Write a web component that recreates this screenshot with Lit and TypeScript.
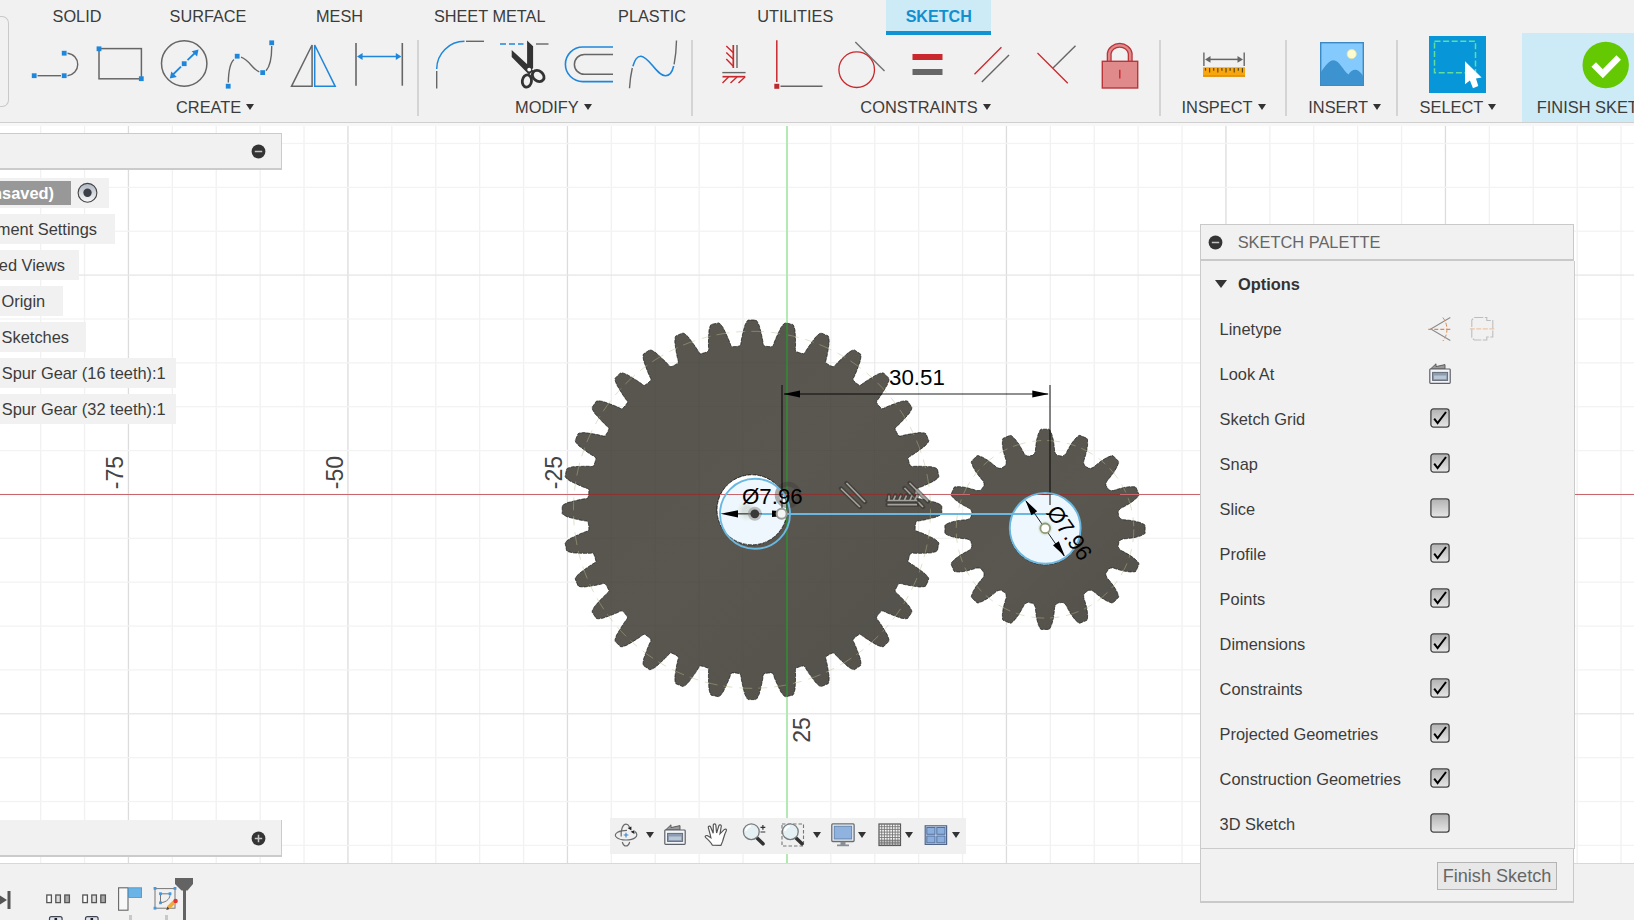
import { LitElement, html, svg, css } from "lit";
import { customElement } from "lit/decorators.js";

const BLUE = "#1f87db";
const GREY = "#666";
const RED = "#c9282d";

const range = (n: number, from = 0) => Array.from({ length: n }, (_, i) => i + from);

/** An icon whose drawing is given in window coordinates. */
const ico = (x: number, y: number, w: number, h: number, body: unknown) =>
  html`<svg class="ico" width=${w} height=${h} viewBox="${x} ${y} ${w} ${h}">${body}</svg>`;

const handle = (x: number, y: number) =>
  svg`<rect x=${x - 2.4} y=${y - 2.4} width="4.8" height="4.8" fill=${BLUE} />`;
const line = (x1: number, y1: number, x2: number, y2: number, c = GREY, w = 1.4) =>
  svg`<line x1=${x1} y1=${y1} x2=${x2} y2=${y2} stroke=${c} stroke-width=${w} />`;
const path = (d: string, c = GREY, w = 1.4) => svg`<path d=${d} fill="none" stroke=${c} stroke-width=${w} />`;
const solid = (d: string, c: string) => svg`<path d=${d} fill=${c} />`;

const createIcons = [
  svg`${line(38, 75.7, 61.5, 75.7)}${path("M68 53.2A11.3 11.3 0 0 1 68 75.7")}${handle(34.7, 75.7)}${handle(64.7, 53.2)}${handle(64.7, 75.7)}`,
  svg`<rect x="99" y="48.6" width="42.4" height="30.2" fill="none" stroke=${GREY} stroke-width="1.5" />
    ${handle(99, 48.8)}${handle(141.3, 78.7)}`,
  svg`<circle cx="184.7" cy="63.5" r="22.7" fill="none" stroke=${GREY} stroke-width="1.5" />
    ${line(173, 75, 181.5, 66.7, BLUE, 1.8)}${line(188, 60.2, 196, 52.5, BLUE, 1.8)}${handle(184.7, 63.7)}
    ${solid("M170.3 78.4L171.8 71.4L177.3 77ZM199 49.6L192.2 51.2L197.6 56.6Z", BLUE)}`,
  svg`${path("M228.3 82.5C228.5 72 230 63 234 59.5M241 57.2C250 60.5 252 69 259.3 71.8M266 70.8C270.3 66 271.8 57 271.7 46")}
    ${handle(228.2, 86.2)}${handle(237.2, 56.2)}${handle(262.7, 72.6)}${handle(271.7, 42.8)}`,
  svg`${path("M312.6 45V86.3H292Z", GREY, 1.5)}${path("M315.2 45V86.3H335.7Z", BLUE, 1.5)}`,
  svg`${line(356, 43, 356, 85.7, GREY, 1.6)}${line(402.3, 43, 402.3, 85.7, GREY, 1.6)}${line(360, 56.5, 398, 56.5, BLUE, 1.6)}
    ${solid("M357 56.5L362.6 53V60ZM401.4 56.5L395.8 53V60Z", BLUE)}`,
];

const modifyIcons = [
  svg`${path("M436.7 69A27.8 27.8 0 0 1 464.5 41.3", BLUE, 1.5)}${line(466, 41.3, 484, 41.3)}${line(436.7, 71, 436.7, 88.5)}`,
  svg`<line x1="500.5" y1="44" x2="524" y2="44" stroke=${BLUE} stroke-width="1.5" stroke-dasharray="6 3" />
    ${line(536.5, 44, 549, 44)}
    ${solid("M527.6 40.5L533.6 46.2V68L531 71L527.6 67ZM512.2 50L528.5 65L534 71L529.5 74.5L524 69L512.2 57Z", "#333")}
    <ellipse cx="527.4" cy="81" rx="4.6" ry="6.2" fill="none" stroke="#333" stroke-width="2.8" transform="rotate(8 527.4 81)" />
    <ellipse cx="538.7" cy="76" rx="6.3" ry="5" fill="none" stroke="#333" stroke-width="2.8" transform="rotate(38 538.7 76)" />
    <circle cx="529.7" cy="69.6" r="1.9" fill="#fff" />`,
  svg`${path("M613 47H582.7A17.3 17.3 0 0 0 582.7 81.6H613", BLUE, 1.6)}${path("M613 54.5H584.3A9.9 9.9 0 0 0 584.3 74.3H613", GREY, 1.5)}`,
  svg`${path("M630 88.3C630.5 80 631.5 73.5 632.8 68")}
    ${path("M633.4 66.2C635.5 58.5 638 56 641.5 56.2C650 56.8 657 75.8 666 75.8C671 75.8 673 71 674.2 66", BLUE, 1.6)}
    ${path("M674.6 64.3C676 57 676.8 50 677 40.5")}`,
];

const constraintIcons = [
  svg`${line(734.3, 45, 734.3, 68, RED, 1.7)}${line(738, 45, 738, 68)}
    ${path("M727.3 46L734 52.5M727.3 52.5L734 59M727.3 59L734 66M729.5 77L723.5 83M738 77L731.5 83M746 77L739.5 83", RED, 1.4)}
    ${line(723.3, 72.6, 746.6, 72.6)}${line(723.5, 76.7, 746.3, 76.7, RED, 1.7)}`,
  svg`${line(777.3, 40.3, 777.3, 82, RED, 1.5)}<rect x="774.8" y="83.8" width="5" height="5" fill="#b92b30" />${line(781, 86.3, 823, 86.3)}`,
  svg`<circle cx="857.7" cy="69.7" r="17.8" fill="none" stroke=${RED} stroke-width="1.3" />${line(856.3, 42, 885.5, 71, "#707070")}`,
  svg`<rect x="913" y="54" width="30" height="6" fill=${RED} /><rect x="913" y="69" width="30" height="6" fill=${GREY} />`,
  svg`${line(975.5, 74.2, 1002.4, 47.2, RED, 1.3)}${line(982.8, 82, 1010, 55)}`,
  svg`${line(1038, 53, 1068.3, 83.2, RED, 1.3)}${line(1053.5, 68, 1076, 45.7)}`,
  svg`<path d="M1110.2 61V53.5A10.6 9.5 0 0 1 1131.2 53.5V61" fill="none" stroke="#b8353a" stroke-width="5" />
    <path d="M1110.2 61V53.5A10.6 9.5 0 0 1 1131.2 53.5V61" fill="none" stroke="#e08a8c" stroke-width="2.4" />
    <rect x="1103.3" y="61.3" width="35.4" height="26.7" fill="#e08a8c" stroke="#b8353a" stroke-width="1.4" />
    ${line(1120.8, 69.7, 1120.8, 78.5, RED, 1.4)}`,
];

const inspectIcon = svg`
  ${line(1204.9, 52.5, 1204.9, 66)}${line(1245.2, 52.5, 1245.2, 66)}${line(1210, 59.4, 1241, 59.4, GREY, 1.5)}
  ${solid("M1206 59.4L1211.5 56V62.8ZM1244 59.4L1238.5 56V62.8Z", GREY)}
  <rect x="1204" y="67.3" width="42" height="9.4" fill="#f9a60c" />${line(1204, 76, 1246, 76, "#dd8f07", 1.3)}
  ${range(10).map((i) => line(1206.5 + i * 4.1, 68, 1206.5 + i * 4.1, i % 2 ? 72.5 : 70.7, "#5c4a20", 1.2))}`;

const insertIcon = svg`
  <rect x="1321.7" y="42.7" width="42.6" height="42.6" fill="#84cafc" stroke="#3c8ac4" stroke-width="1.4" />
  ${solid("M1322 72C1326 66 1330 60.2 1334.5 60.2C1340 60.2 1344 70 1349.5 74.5C1351.5 71 1354 69.5 1357 69.8C1360 70.2 1362 73 1364 76V85H1322Z", "#3d93cf")}
  <circle cx="1352.7" cy="54" r="4.6" fill="#fffbd0" stroke="#e9e7a0" stroke-width="0.8" />`;

const selectIcon = svg`
  <rect x="1429" y="36" width="57" height="57" fill="#0796d8" />
  <rect x="1434.5" y="41.3" width="41" height="31.4" fill="none" stroke="#62dd9c" stroke-width="1.5" stroke-dasharray="6 2.6" />
  ${solid("M1465 61.3L1481.6 77.6L1476 78.4L1478.3 86L1473 88.3L1469.9 80.6L1465 84.3Z", "#fff")}`;

const finishIcon = svg`
  <circle cx="1605.7" cy="65" r="23.2" fill="#64c803" />
  <path d="M1593.7 64.6L1602.8 73.8L1618.7 57.6" fill="none" stroke="#fff" stroke-width="6.4" />`;

const cells = (x: number, y: number, icons: unknown[]) => icons.map((b, i) => ico(x + i * 64.5, y, 64.5, 60, b));

interface Group {
  label: string;
  width: number;
  iconPad: number;
  textPad: number;
  icons: unknown;
}

const groups: Group[] = [
  { label: "CREATE", width: 408, iconPad: 15.2, textPad: 167, icons: cells(24.5, 35, createIcons) },
  { label: "MODIFY", width: 272.3, iconPad: 8.7, textPad: 96, icons: cells(428, 35, modifyIcons) },
  { label: "CONSTRAINTS", width: 466, iconPad: 8.2, textPad: 167, icons: cells(702, 35, constraintIcons) },
  { label: "INSPECT", width: 124, iconPad: 34.2, textPad: 20.2, icons: ico(1196, 35, 60, 60, inspectIcon) },
  { label: "INSERT", width: 109, iconPad: 25.2, textPad: 21, icons: ico(1313, 35, 60, 60, insertIcon) },
  { label: "SELECT", width: 121.5, iconPad: 28.4, textPad: 21.3, icons: ico(1427, 35, 60, 60, selectIcon) },
];

/** Closed outline of a spur gear; profile is [half width, radius] from tip to root. */
function gearPath(cx: number, cy: number, teeth: number, profile: number[][], root: number, hole: number) {
  const pts: string[] = [];
  for (let i = 0; i < teeth; i++) {
    const a = (i * 2 * Math.PI) / teeth;
    const put = (t: number, r: number) => {
      const x = cx + r * Math.sin(a) + t * Math.cos(a);
      const y = cy - r * Math.cos(a) + t * Math.sin(a);
      pts.push(`${x.toFixed(2)} ${y.toFixed(2)}`);
    };
    [...profile].reverse().forEach(([t, r]) => put(-t, r));
    profile.forEach(([t, r]) => put(t, r));
    const h = Math.PI / teeth;
    put(root * Math.sin(h), root * Math.cos(h));
  }
  return `M${pts.join("L")}Z M${cx - hole} ${cy}a${hole} ${hole} 0 1 0 ${2 * hole} 0a${hole} ${hole} 0 1 0 ${-2 * hole} 0Z`;
}

const bigGear = gearPath(752, 509.8, 32, [[3.8, 189.8], [5.2, 188.4], [7.2, 184.3], [8.8, 178], [10.2, 172], [11, 167.5], [11.2, 165.5], [12, 163.9]], 164, 35);
const smallGear = gearPath(1045, 529.3, 16, [[3.8, 100.1], [4.8, 99.4], [6.8, 95], [8.4, 89], [9.3, 82], [9.6, 78], [10.6, 75.6], [12.2, 74]], 75, 35.5);

const glyphLine = (d: string) => svg`
  <path d=${d} stroke="#35332f" stroke-opacity="0.6" stroke-width="4.4" stroke-linecap="round" fill="none" />
  <path d=${d} stroke="#a3a29c" stroke-width="1.7" fill="none" />`;

const scene = svg`
  <defs>
    <linearGradient id="steel" x1="0" y1="0" x2="1" y2="1">
      <stop offset="0" stop-color="#57564f" /><stop offset="0.5" stop-color="#5a5650" /><stop offset="1" stop-color="#53514b" />
    </linearGradient>
    <radialGradient id="halo"><stop offset="0.4" stop-color="#8f9a78" stop-opacity="0.75" /><stop offset="1" stop-color="#c8dba8" stop-opacity="0" /></radialGradient>
  </defs>
  ${range(38, -17).map((i) => svg`<rect x=${786.3 + i * 43.9} y="126" width="1.3" height="740" fill=${i % 5 === 0 ? "#dcdcdc" : "#f1f1f1"} />`)}
  ${range(18, -8).map((i) => svg`<rect x="0" y=${493.8 + i * 43.87} width="1634" height="1.3" fill=${i % 5 === 0 ? "#e6e6e6" : "#f3f3f3"} />`)}
  <g class="axis">
    ${[["-75", 114.8], ["-50", 334.6], ["-25", 554.2]].map(([t, x]) => svg`<text transform="translate(${Number(x) + 8} 472.5) rotate(-90)" text-anchor="middle">${t}</text>`)}
    <text transform="translate(810 730) rotate(-90)" text-anchor="middle">25</text>
  </g>
  <rect x="786" y="126" width="2" height="740" fill="#b3e9b3" />
  <path d=${bigGear} fill="url(#steel)" fill-rule="evenodd" />
  <path d=${bigGear} fill="none" stroke="#1c1c19" stroke-width="0.7" stroke-dasharray="4 1" />
  <path d=${smallGear} fill="url(#steel)" fill-rule="evenodd" />
  <path d=${smallGear} fill="none" stroke="#1c1c19" stroke-width="0.7" stroke-dasharray="4 1" />
  <circle cx="752" cy="509.8" r="178.5" fill="none" stroke="#b9bd8a" stroke-opacity="0.5" stroke-width="0.9" stroke-dasharray="13 7 9 6" />
  <circle cx="1045" cy="529.3" r="88.8" fill="none" stroke="#b9bd8a" stroke-opacity="0.5" stroke-width="0.9" stroke-dasharray="13 7 9 6" />
  ${range(8, -4).map((i) => svg`<rect x=${786.3 + i * 43.9} y="350" width="1" height="320" fill="#000" fill-opacity="0.025" />`)}
  ${range(7, -3).map((i) => svg`<rect x="590" y=${493.8 + i * 43.87} width="324" height="1" fill="#000" fill-opacity="0.025" />`)}
  <circle cx="752" cy="509.8" r="35" fill="#fff" />
  <clipPath id="bore"><circle cx="752" cy="509.8" r="35" /></clipPath>
  <circle cx="755" cy="513.8" r="35" fill="#eef7fe" clip-path="url(#bore)" />
  <circle cx="752" cy="509.8" r="35" fill="none" stroke="#222" stroke-width="0.8" stroke-dasharray="4 1" />
  <circle cx="1045.2" cy="528.3" r="35.3" fill="#eef7fe" />
  <rect x="786" y="323" width="2" height="373" fill="#38803a" />
  <rect x="0" y="494" width="1634" height="1" fill="#c9666b" />
  <rect x="588" y="494" width="132" height="1" fill="#8a3432" />
  <rect x="790" y="494" width="126" height="1" fill="#8a3432" />
  <rect x="970" y="494" width="150" height="1" fill="#8a3432" />
  <circle cx="788" cy="495" r="11" fill="none" stroke="#3c3a36" stroke-opacity="0.4" stroke-width="4.5" />
  <g stroke="#000" stroke-opacity="0.58" stroke-width="1.6">
    <path d="M782 385V508M1050 385V505" />
    <path d="M784 394H1048" />
  </g>
  <path d="M783.5 394L800 390.6V397.4ZM1049 394L1032.3 390.6V397.4Z" />
  <g fill="none" stroke="#6ab8e0">
    <circle cx="755" cy="513.8" r="35" stroke-width="1.9" />
    <circle cx="1045.2" cy="528.3" r="35.4" stroke-width="1.9" />
    <path d="M762 514H776M787 514H1050" stroke-width="2.2" />
  </g>
  ${glyphLine("M841 488.5L860 507M846.5 483L865 502")}
  ${glyphLine("M904.5 488L923 507M909.5 483L928 501.5")}
  ${glyphLine("M887.5 500.5H917M887.5 504.7H917M889 500V495.5M893.5 500L895.5 495.5M899 500L901 495.5M904.5 500L906.5 495.5M910 500L912 495.5M915 500L917 495.5")}
  <circle cx="747" cy="511" r="11" fill="url(#halo)" opacity="0.35" />
  <path d="M736 513.8H762" stroke="#555" stroke-width="1.5" />
  <path d="M720.5 513.8L738 510.2V517.4ZM779 511L772 510.5V517L779 516.5Z" />
  <circle cx="754.8" cy="513.8" r="7" fill="#888" fill-opacity="0.5" /><circle cx="754.8" cy="513.8" r="4.4" fill="#3a3838" />
  <circle cx="781.6" cy="513.8" r="5" fill="#f4f6f4" stroke="#9a9a98" stroke-width="2" />
  <text class="dim" x="889" y="385">30.51</text>
  <text class="dim" x="742" y="503.7">Ø7.96</text>
  <path d="M1026 501L1064 556" stroke="#222" stroke-width="1" />
  <path d="M1025.3 500L1037.2 511.2L1031.4 515.2ZM1065 556.6L1053 545.2L1058.8 541.2Z" />
  <circle cx="1045.2" cy="528.3" r="8" fill="url(#halo)" />
  <circle cx="1045.2" cy="528.3" r="4.8" fill="#fff" stroke="#8f9a78" stroke-width="1.8" />
  <text class="dim" transform="translate(1069.8 532.6) rotate(55)" text-anchor="middle" y="8">Ø7.96</text>`;

const tri = (cls = "") => html`<span class="tri ${cls}"></span>`;

const badge = (plus: boolean) => html`<svg class="ico" width="15" height="15" viewBox="0 0 15 15">
  <circle cx="7.5" cy="7.5" r="6.9" fill="#343434" />
  <path d=${plus ? "M3.8 7.5H11.2M7.5 3.8V11.2" : "M3.8 7.5H11.2"} stroke="#c4c4c4" stroke-width="1.5" /></svg>`;

const lookAt = html`<svg class="ico look" width="22" height="22" viewBox="0 0 22 22">
  <path d="M1.5 6L7 .8V3.6L16 1.6V6Z" fill="#999" stroke="#555" stroke-width="0.9" />
  <rect x="0.8" y="6" width="20.4" height="14.3" rx="0.8" fill="#f3f5f8" stroke="#5c6068" stroke-width="1.2" />
  <rect x="3.6" y="9.4" width="15" height="8" fill="#8c9db3" stroke="#646b75" stroke-width="1" />
  <rect x="5" y="12.5" width="12.2" height="3.6" fill="#b9c6d5" /></svg>`;

const lens = svg`<path d="M14.5 14.5L21 20.8" stroke="#333" stroke-width="3.6" stroke-linecap="round" />
  <circle cx="9.3" cy="8.7" r="7.9" fill="#e4f0f4" stroke="#777c80" stroke-width="1.3" />
  <path d="M4 8A5.5 5.5 0 0 1 9 3.2" stroke="#fff" stroke-width="2" fill="none" />`;

const nav = (body: unknown) => html`<svg class="ico" width="24" height="24" viewBox="0 0 24 24">${body}</svg>`;

const orbit = nav(svg`
  <path d="M8.3 19C9 21.5 10.3 23 12 23C13.7 23 15 21.5 15.7 19M7.2 13.5C6.6 6.5 8.8 1.2 12 1.2C13.4 1.2 14.6 2.2 15.5 4" fill="none" stroke="#6a6a6a" stroke-width="1.2" />
  <path d="M21 8.5C26 13 20 17 12 17C3.5 17 -2 12.5 3.6 9.2C5.8 8 9 7.4 13 7.4" fill="none" stroke="#6a6a6a" stroke-width="1.2" />
  <path d="M12 9.8V14.4M9.7 12H14.3" stroke="#3b83cf" stroke-width="1.1" />
  <path d="M13.6 5L17.4 3.4V7.4ZM16.6 8.8L20.4 7.2V11Z" fill="#222" />`);
const hand = nav(svg`<path d="M8.4 22.2C7 19.4 4.5 17 1.5 14.4C.6 13.4 1.8 12.2 3.2 12.6L6.9 14.8C6.3 11.4 5 7.2 4.3 4.6C4.1 3 6 2.6 6.6 4L9.2 10.2L9.3 1.9C9.4 .4 11.7 .4 11.8 1.9L12.6 10L14.9 2.6C15.5 1.2 17.5 1.8 17.3 3.2L16 10.8L20.4 6.4C21.6 5.5 23.1 6.6 22.2 8C20.3 11.3 19.6 15.2 18.6 18.4L16.9 22.4Z" fill="#fff" stroke="#555" stroke-width="1.2" />`);
const zoomer = nav(svg`${lens}<path d="M18.5 4.3H23.3M20.9 1.9V6.7M18.5 9H23.3" stroke="#333" stroke-width="1.2" />`);
const zoomWindow = nav(svg`<rect x="1" y="1" width="21.5" height="22" fill="none" stroke="#777" stroke-width="1.1" stroke-dasharray="3.5 2" />${lens}`);
const monitor = nav(svg`<rect x="0.8" y="0.9" width="22.3" height="17.6" rx="1" fill="#f0f3f6" stroke="#666d76" stroke-width="1.3" />
  <rect x="3.2" y="3.2" width="17.5" height="12.8" fill="#8fb3de" stroke="#5d7fa8" stroke-width="0.9" />
  <path d="M9.5 18.8H14.5V21.5H18V23.3H6V21.5H9.5Z" fill="#888f96" />`);
const gridIcon = nav(svg`<rect x="1" y="1" width="21.5" height="21.5" fill="#f4f4f4" stroke="#555" stroke-width="1.2" />
  ${range(7, 1).map((i) => svg`${line(1 + i * 2.7, 1, 1 + i * 2.7, 22.5, "#777", 0.9)}${line(1, 1 + i * 2.7, 22.5, 1 + i * 2.7, "#777", 0.9)}`)}
  <rect x="1" y="17" width="21.5" height="5.5" fill="#666" fill-opacity="0.35" />`);
const viewports = nav(svg`<rect x="1.2" y="2.8" width="21.4" height="18.6" fill="#d4e1f2" stroke="#4f658a" stroke-width="1.2" />
  ${[[2.8, 4.5], [12.8, 4.5], [2.8, 13], [12.8, 13]].map(([x, y]) => svg`<rect x=${x} y=${y} width="8.2" height="6.8" fill="#8aaedd" stroke="#55709c" stroke-width="1" />`)}`);

const linetype = html`<svg class="ico" width="70" height="26" viewBox="1429.7 316 70 26">
  <path d="M1450 317.5L1430.5 329L1450 340.5" fill="none" stroke="#8c8c8c" stroke-width="1.1" />
  <path d="M1428 329.4H1452" stroke="#df8a54" stroke-width="1.1" stroke-dasharray="4 2" />
  <path d="M1442.5 317.5C1448 324 1448 335 1442.5 341" fill="none" stroke="#df8a54" stroke-width="1" stroke-dasharray="4 2" />
  <path d="M1474 317.5H1486.5V320.5H1492.5V337H1486.5V340H1474L1471.5 337.5V320Z" fill="none" stroke="#bdbdbd" stroke-width="1.1" stroke-dasharray="9 1.5" />
  <path d="M1469.5 328.8H1494" stroke="#ecc6a8" stroke-width="1.2" stroke-dasharray="5 1.5" /></svg>`;

const box = (on: boolean) => html`<svg class="ico check" width="20" height="20" viewBox="0 0 20 20">
  <defs><linearGradient id="g" x1="0" y1="0" x2="0" y2="1">
    <stop offset="0" stop-color=${on ? "#b2b2b2" : "#fbfbfb"} /><stop offset="1" stop-color=${on ? "#e6e6e6" : "#b6b6b6"} /></linearGradient></defs>
  <rect x="0.9" y="0.9" width="18.2" height="18.2" rx="2.6" fill="url(#g)" stroke="#444" stroke-width="1.3" />
  ${on ? svg`<path d="M4.2 10.6L7.6 15L16 4" fill="none" stroke="#000" stroke-width="2" />` : ""}</svg>`;

const options: [string, boolean][] = [
  ["Sketch Grid", true], ["Snap", true], ["Slice", false], ["Profile", true], ["Points", true], ["Dimensions", true],
  ["Constraints", true], ["Projected Geometries", true], ["Construction Geometries", true], ["3D Sketch", false],
];

/** Label, row width, space to the right of the label. */
const tree: [string, number, number][] = [
  ["Document Settings", 115, 18], ["Named Views", 79, 14], ["Origin", 62.5, 17.3], ["Sketches", 86, 17],
  ["Spur Gear (16 teeth):1", 176, 10.3], ["Spur Gear (32 teeth):1", 176, 10.3],
];

const timelineArt = svg`
  ${solid("M0 895.5L7 900L0 904.5Z", "#555")}${line(9, 891, 9, 909, "#555", 3)}
  ${[46, 82].map((x) => range(3).map((i) => svg`<rect x=${x + 0.8 + i * 9} y="895" width="4.6" height="7.6" fill=${["#fff", "#ddd", "#aaa"][i]} stroke="#555" stroke-width="1.3" />`))}
  ${[49.5, 85.5].map((x) => svg`<rect x=${x} y="916.7" width="12.6" height="8" rx="2" fill="#dfe3f2" stroke="#3f4352" stroke-width="1.2" /><rect x=${x + 5} y="918" width="2.6" height="3" fill="#222" />`)}
  <rect x="118.6" y="887.8" width="9.4" height="22.4" fill="#f8f8f8" stroke="#666" stroke-width="1.1" />
  <rect x="128.6" y="887.8" width="13" height="9.6" fill="#69b3e7" stroke="#4a90c4" stroke-width="0.8" />
  ${line(130.5, 915, 130.5, 920, "#c8c8c8", 3)}${line(166.5, 915, 166.5, 920, "#c8c8c8", 3)}
  <rect x="155" y="888.6" width="20" height="19.6" fill="none" stroke="#777" stroke-width="1" />
  <path d="M160.5 902.8V893.8H170C170.3 898 167.5 902 160.5 902.8Z" fill="none" stroke="#777" stroke-width="1" />
  ${[[155, 888.4], [175, 888.4], [155, 908.2], [160.5, 893.7], [170, 893.7], [160.5, 902.8]].map(([x, y]) => svg`<rect x=${x - 1.4} y=${y - 1.4} width="2.8" height="2.8" fill="#3d9be6" />`)}
  ${solid("M166.3 910L167.8 905.6L174 899.6L176.6 902.6L170.3 908.6Z", "#f0ab3a")}${solid("M166.3 910L167.4 906.6L169.5 909Z", "#444")}
  <circle cx="175.6" cy="901" r="2.2" fill="#e03535" />
  ${line(184.5, 888, 184.5, 920, "#636363", 3)}${solid("M175 878H193V884L187.5 890.5H181.5L175 884Z", "#636363")}`;

@customElement("app-root")
export class AppRoot extends LitElement {
  static styles = css`
    :host {
      display: flex;
      flex-direction: column;
      position: relative;
      width: 1634px;
      height: 920px;
      overflow: hidden;
      background: #fff;
      color: #3c3c3c;
      font: 16.4px/20px "Liberation Sans", Arial, sans-serif;
      white-space: nowrap;
    }
    .ico { display: block; flex: none; overflow: visible; }
    .toolbar { flex: none; height: 122px; background: #f1f1f1; border-bottom: 1px solid #cfcfcf; display: flex; flex-direction: column; }
    .tabs { height: 35px; display: grid; padding-left: 12px; grid-template-columns: 130px 132px 131px 169.4px 155.2px 131.4px 25.5px 104.5px; }
    .tab { text-align: center; line-height: 32px; height: 35px; font-size: 16.3px; }
    .tab.active { grid-column: 8; box-sizing: border-box; background: #cdeaf7; color: #118fcf; font-weight: bold; font-size: 16.1px; border-bottom: 4px solid #1192d3; }
    .groups { display: flex; height: 87px; }
    .edge { box-sizing: border-box; width: 9px; height: 91px; margin-top: -19px; border: 1.5px solid #c9c9c9; border-left: none; border-radius: 0 7px 7px 0; flex: none; }
    .group { box-sizing: border-box; height: 87px; flex: none; }
    .icons { display: flex; height: 60px; }
    .label { display: flex; align-items: center; gap: 5px; height: 24px; }
    .sep { width: 2px; height: 76px; margin-top: 5px; background: #d4d4d4; flex: none; }
    .finish { margin-left: 2px; margin-top: -2px; padding-top: 2px; width: 112px; height: 87px; background: #cdeaf7; overflow: hidden; flex: none; }
    .finish .icons { padding-left: 53px; }
    .finish .label { padding-left: 15px; }
    .tri { width: 0; height: 0; border: 4.7px solid transparent; border-top: 6px solid #333; border-bottom: none; flex: none; }
    .tri.big { border-width: 8px 6.3px 0; }
    .view { flex: 1; position: relative; overflow: hidden; border-top: 3px solid #f7f7f7; }
    .scene { display: block; }
    .axis { font-size: 23px; fill: #444; }
    .dim { font-size: 22.3px; fill: #000; }
    .timeline { flex: none; height: 56px; background: #f1f1f1; border-top: 1px solid #d8d8d8; }
    .timeline svg { display: block; }

    .bar { position: absolute; left: 0; box-sizing: border-box; width: 282px; height: 37px; background: #f1f1f1; border: 1px solid #cbcbcb; border-left: none; border-bottom-width: 2px; display: flex; align-items: center; justify-content: flex-end; padding-right: 15.3px; }
    .bar.top { top: 133px; }
    .bar.bottom { top: 820px; border-top: none; padding-top: 2px; }
    .tree { position: absolute; top: 178px; left: 0; display: flex; flex-direction: column; gap: 6px; align-items: flex-start; }
    .node { box-sizing: border-box; height: 30px; background: #f1f1f1; display: flex; align-items: center; justify-content: flex-end; overflow: hidden; }
    .node.root { width: 109px; padding-right: 11px; gap: 6px; }
    .doc { box-sizing: border-box; height: 24px; width: 71px; background: #989898; color: #fff; font-weight: bold; display: flex; align-items: center; justify-content: flex-end; padding-right: 17px; overflow: hidden; flex: none; }
    .navbar { position: absolute; left: 610px; top: 818px; width: 356px; height: 35.5px; background: #f0f0f0; display: grid; align-items: center; box-sizing: border-box; padding: 0 0 1px 4px;
      grid-template-columns: 32px 19px 38.5px 38.5px 39px 32px 17.5px 27.5px 19.5px 27px 19px 28px 10px; }

    .palette { position: absolute; left: 1200px; top: 224px; width: 375px; display: flex; flex-direction: column; }
    .head { box-sizing: border-box; width: 374px; height: 37px; border: 1px solid #c9c9c9; border-bottom-width: 2px; background: #f1f1f1; display: flex; align-items: center; gap: 14.5px; padding-left: 7.2px; color: #666; }
    .body { box-sizing: border-box; width: 375px; height: 588px; border: 1.5px solid #cbcbcb; border-top: none; background: #f1f1f1; }
    .section { display: flex; align-items: center; gap: 11px; height: 45px; padding-left: 14px; font-weight: bold; color: #333; }
    .row { display: grid; grid-template-columns: 210px 1fr; align-items: center; height: 45px; padding-left: 18.6px; }
    .check { margin-bottom: 1.4px; }
    .look { margin-left: -0.8px; }
    .foot { box-sizing: border-box; width: 374px; height: 54px; border: 1px solid #c9c9c9; border-top: none; border-bottom-width: 2px; background: #f1f1f1; display: flex; justify-content: flex-end; padding: 13px 16px 0 0; }
    .btn { box-sizing: border-box; width: 120px; height: 28px; border: 1.5px solid #b4b4b4; background: #e8e8e8; color: #666; font-size: 18.1px; line-height: 26px; text-align: center; }
  `;

  private group(g: Group, last: boolean) {
    return html`<div class="group" style="width:${g.width}px">
        <div class="icons" style="padding-left:${g.iconPad}px">${g.icons}</div>
        <div class="label" style="padding-left:${g.textPad}px">${g.label}${tri()}</div>
      </div>
      ${last ? "" : html`<div class="sep"></div>`}`;
  }

  render() {
    const tabs = ["SOLID", "SURFACE", "MESH", "SHEET METAL", "PLASTIC", "UTILITIES"];
    return html`
      <div class="toolbar">
        <div class="tabs">
          ${tabs.map((t) => html`<div class="tab">${t}</div>`)}
          <div class="tab active">SKETCH</div>
        </div>
        <div class="groups">
          <div class="edge"></div>
          ${groups.map((g, i) => this.group(g, i === groups.length - 1))}
          <div class="finish">
            <div class="icons">${ico(1575, 35, 59, 60, finishIcon)}</div>
            <div class="label">FINISH SKETCH${tri()}</div>
          </div>
        </div>
      </div>
      <div class="view">
        <svg class="scene" width="1634" height="740" viewBox="0 126 1634 740">${scene}</svg>
      </div>
      <div class="timeline"><svg width="220" height="56" viewBox="0 864 220 56">${timelineArt}</svg></div>

      <div class="bar top">${badge(false)}</div>
      <div class="tree">
        <div class="node root">
          <div class="doc">(Unsaved)</div>
          <svg class="ico" width="21" height="21" viewBox="0 0 21 21">
            <defs><linearGradient id="r" x1="0" y1="0" x2="0" y2="1"><stop offset="0" stop-color="#aeb6c4" /><stop offset="1" stop-color="#fafafa" /></linearGradient></defs>
            <circle cx="10.5" cy="9.8" r="9.4" fill="url(#r)" stroke="#444" stroke-width="1.1" />
            <circle cx="10.5" cy="9.8" r="4.2" fill="#3c3f47" />
          </svg>
        </div>
        ${tree.map(([t, w, p]) => html`<div class="node" style="width:${w}px;padding-right:${p}px">${t}</div>`)}
      </div>
      <div class="bar bottom">${badge(true)}</div>

      <div class="navbar">
        ${orbit}${tri()}${lookAt}${hand}${zoomer}${zoomWindow}${tri()}${monitor}${tri()}${gridIcon}${tri()}${viewports}${tri()}
      </div>

      <div class="palette">
        <div class="head">${badge(false)}<span>SKETCH PALETTE</span></div>
        <div class="body">
          <div class="section">${tri("big")}<span>Options</span></div>
          <div class="row"><span>Linetype</span>${linetype}</div>
          <div class="row"><span>Look At</span>${lookAt}</div>
          ${options.map(([t, on]) => html`<div class="row"><span>${t}</span>${box(on)}</div>`)}
        </div>
        <div class="foot"><div class="btn">Finish Sketch</div></div>
      </div>
    `;
  }
}
